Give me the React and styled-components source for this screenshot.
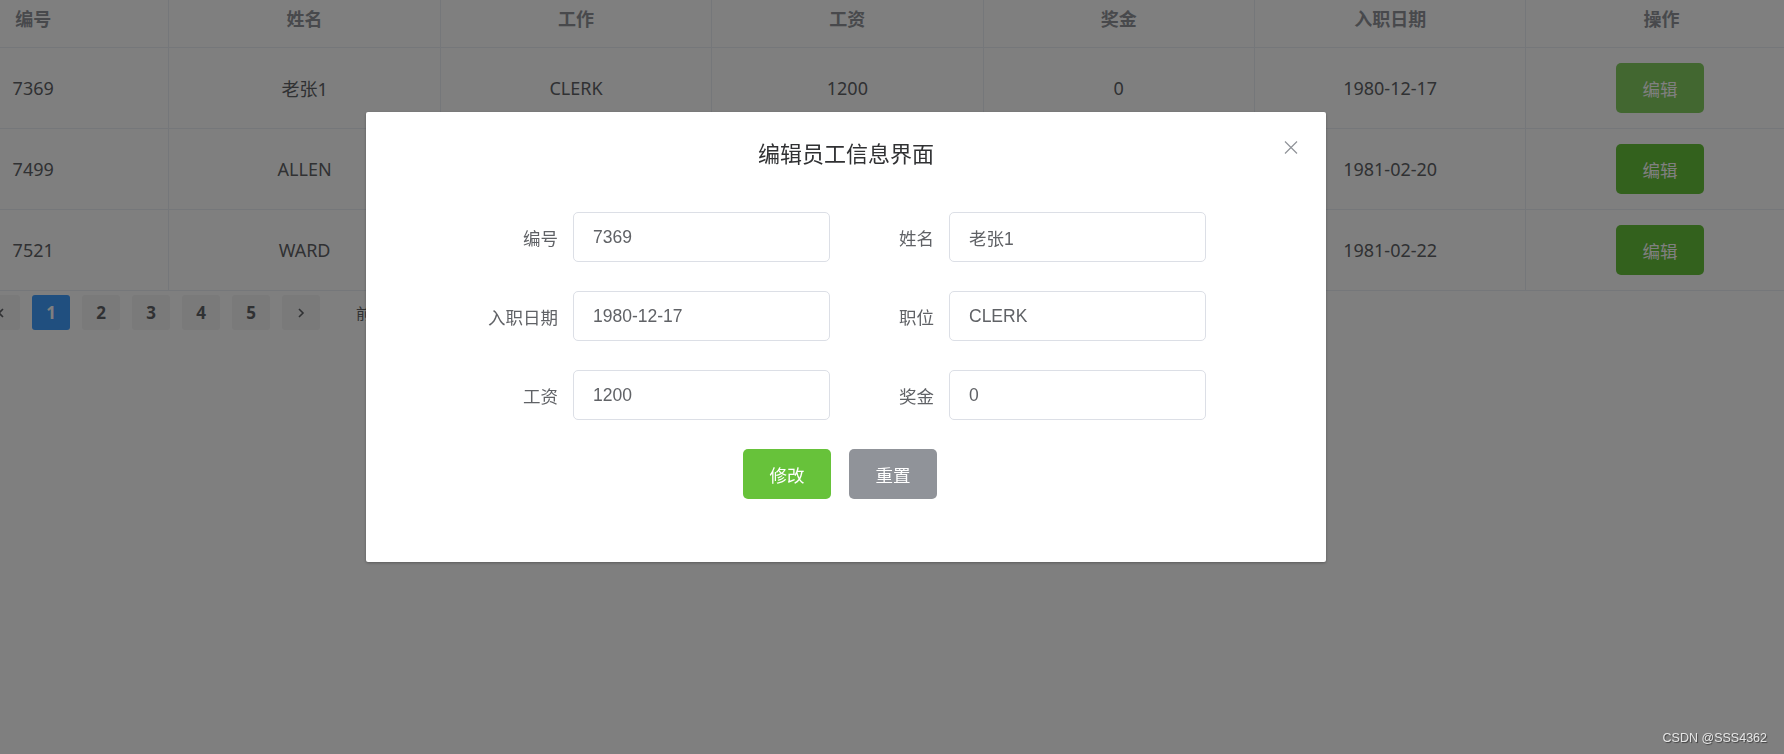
import React from "react";
import styled, { createGlobalStyle } from "styled-components";

const GlobalStyle = createGlobalStyle`
  html, body {
    margin: 0;
    padding: 0;
    background: #fff;
    overflow: hidden;
  }
  body {
    font-family: "Noto Sans", "Noto Sans CJK SC", sans-serif;
  }
`;

const Page = styled.div`
  position: relative;
  width: 1784px;
  height: 754px;
  overflow: hidden;
`;

const Content = styled.div`
  margin-left: -102px;
`;

const Table = styled.div`
  width: 1900px;
`;

const Row = styled.div`
  display: grid;
  grid-template-columns: repeat(7, 271.4px);
  box-sizing: border-box;
  height: ${(p) => (p.head ? 48 : 81)}px;
  border-bottom: 1px solid #ebeef5;
`;

const Cell = styled.div`
  display: flex;
  align-items: center;
  justify-content: center;
  box-sizing: border-box;
  border-right: 1px solid #ebeef5;
  font-size: 18px;
  color: ${(p) => (p.head ? "#909399" : "#606266")};
  font-weight: ${(p) => (p.head ? 700 : 400)};
  padding-bottom: ${(p) => (p.head ? 12 : 0)}px;
`;

const EditButton = styled.button`
  width: 88px;
  height: 50px;
  margin-left: -3px;
  border: none;
  border-radius: 5px;
  background: ${(p) => (p.hover ? "#85ce61" : "#67c23a")};
  color: #fff;
  font-family: "Noto Sans CJK SC", sans-serif;
  font-size: 17.5px;
`;

const Pager = styled.div`
  display: flex;
  align-items: center;
  gap: 12px;
  margin-top: 4px;
  padding-left: 84px;
`;

const PageItem = styled.div`
  width: 38px;
  height: 35px;
  border-radius: 3px;
  display: flex;
  align-items: center;
  justify-content: center;
  background: ${(p) => (p.active ? "#409eff" : "#f4f4f5")};
  color: ${(p) => (p.active ? "#fff" : "#606266")};
  font-family: "Open Sans", sans-serif;
  font-weight: 700;
  font-size: 17px;
`;

const Jumper = styled.div`
  display: flex;
  align-items: center;
  gap: 8px;
  margin-left: 24px;
  font-family: "Noto Sans CJK SC", sans-serif;
  font-size: 15px;
  color: #606266;
`;

const JumpInput = styled.div`
  width: 56px;
  height: 33px;
  border: 1px solid #dcdfe6;
  border-radius: 3px;
`;

const Overlay = styled.div`
  position: fixed;
  inset: 0;
  background: rgba(0, 0, 0, 0.5);
  overflow: hidden;
`;

const Dialog = styled.div`
  position: relative;
  box-sizing: border-box;
  width: 960px;
  height: 450px;
  margin: 112px 0 0 366px;
  background: #fff;
  border-radius: 2px;
  box-shadow: 0 1px 3px rgba(0, 0, 0, 0.3);
  padding-top: 25px;
`;

const Title = styled.div`
  text-align: center;
  font-family: "Noto Sans CJK SC", sans-serif;
  font-size: 22px;
  line-height: 30px;
  color: #303133;
`;

const Close = styled.div`
  position: absolute;
  top: 29px;
  left: 918px;
  width: 14px;
  height: 13px;
  display: flex;
`;

const Form = styled.div`
  display: grid;
  grid-template-columns: 119px 257px 119px 257px;
  row-gap: 29px;
  margin: 45px 0 0 88px;
`;

const Label = styled.label`
  display: flex;
  align-items: center;
  justify-content: flex-end;
  padding-right: 15px;
  font-family: "Noto Sans CJK SC", sans-serif;
  font-size: 17.5px;
  color: #606266;
`;

const Input = styled.input`
  box-sizing: border-box;
  width: 257px;
  height: 50px;
  border: 1px solid #dcdfe6;
  border-radius: 5px;
  padding: 0 19px;
  outline: none;
  font-family: "Liberation Sans", "Noto Sans CJK SC", sans-serif;
  font-size: 17.5px;
  color: #606266;
  background: #fff;
`;

const Actions = styled.div`
  display: flex;
  gap: 18px;
  margin: 29px 0 0 377px;
`;

const Button = styled.button`
  width: 88px;
  height: 50px;
  border: none;
  border-radius: 5px;
  background: ${(p) => p.bg};
  color: #fff;
  font-family: "Noto Sans CJK SC", sans-serif;
  font-size: 17.5px;
`;

const Watermark = styled.div`
  position: absolute;
  right: 17px;
  bottom: 9px;
  font-family: "Liberation Sans", sans-serif;
  font-size: 12.5px;
  color: #e6e6e6;
  text-shadow: 1px 1px 1px rgba(0, 0, 0, 0.5);
`;

const headers = ["编号", "姓名", "工作", "工资", "奖金", "入职日期", "操作"];

// cells hidden behind the dialog are left blank
const rows = [
  ["7369", "老张1", "CLERK", "1200", "0", "1980-12-17"],
  ["7499", "ALLEN", "", "", "", "1981-02-20"],
  ["7521", "WARD", "", "", "", "1981-02-22"],
];

const fields = [
  ["编号", "7369"],
  ["姓名", "老张1"],
  ["入职日期", "1980-12-17"],
  ["职位", "CLERK"],
  ["工资", "1200"],
  ["奖金", "0"],
];

const App = () => (
  <Page>
    <GlobalStyle />
    <Content>
      <Table>
        <Row head>
          {headers.map((h) => (
            <Cell head key={h}>
              {h}
            </Cell>
          ))}
        </Row>
        {rows.map((r, i) => (
          <Row key={r[0]}>
            {r.map((v, j) => (
              <Cell key={j}>{v}</Cell>
            ))}
            <Cell>
              <EditButton hover={i === 0}>编辑</EditButton>
            </Cell>
          </Row>
        ))}
      </Table>
      <Pager>
        <PageItem>
          <svg width="12" height="12" viewBox="0 0 12 12">
            <path d="M8 2 4 6l4 4" fill="none" stroke="#606266" strokeWidth="1.6" />
          </svg>
        </PageItem>
        {[1, 2, 3, 4, 5].map((n) => (
          <PageItem key={n} active={n === 1}>
            {n}
          </PageItem>
        ))}
        <PageItem>
          <svg width="12" height="12" viewBox="0 0 12 12">
            <path d="M4 2l4 4-4 4" fill="none" stroke="#606266" strokeWidth="1.6" />
          </svg>
        </PageItem>
        <Jumper>
          前往
          <JumpInput />
        </Jumper>
      </Pager>
    </Content>

    <Overlay>
      <Dialog>
        <Title>编辑员工信息界面</Title>
        <Close>
          <svg width="14" height="13" viewBox="0 0 14 13">
            <path d="M1 0.5 13 12.5M13 0.5 1 12.5" stroke="#909399" strokeWidth="1.2" />
          </svg>
        </Close>
        <Form>
          {fields.map(([label, value]) => (
            <React.Fragment key={label}>
              <Label>{label}</Label>
              <Input readOnly value={value} />
            </React.Fragment>
          ))}
        </Form>
        <Actions>
          <Button bg="#67c23a">修改</Button>
          <Button bg="#909399">重置</Button>
        </Actions>
      </Dialog>
      <Watermark>CSDN @SSS4362</Watermark>
    </Overlay>
  </Page>
);

export default App;
